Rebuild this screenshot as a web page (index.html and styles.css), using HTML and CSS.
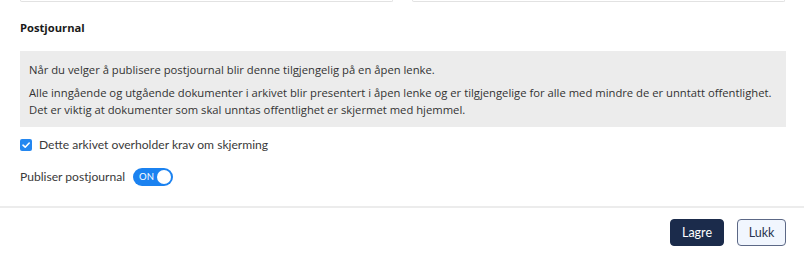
FILE: index.html
```html
<!DOCTYPE html>
<html lang="no">
<head>
<meta charset="utf-8">
<link rel="stylesheet" href="styles.css">
</head>
<body>
<div class="panel">
  <div class="fields">
    <div class="field field-left"></div>
    <div class="field field-right"></div>
  </div>
  <h3 class="heading">Postjournal</h3>
  <div class="info">
    <p>Når du velger å publisere postjournal blir denne tilgjengelig på en åpen lenke.</p>
    <p>Alle inngående og utgående dokumenter i arkivet blir presentert i åpen lenke og er tilgjengelige for alle med mindre de er unntatt offentlighet.<br>Det er viktig at dokumenter som skal unntas offentlighet er skjermet med hjemmel.</p>
  </div>
  <label class="check-row">
    <span class="checkbox">
      <svg width="10" height="10" viewBox="0 0 10 10"><path d="M2 5.2 L4.2 7.2 L8.2 3" fill="none" stroke="#fff" stroke-width="1.6" stroke-linecap="round" stroke-linejoin="round"/></svg>
    </span>
    <span class="label-text">Dette arkivet overholder krav om skjerming</span>
  </label>
  <div class="toggle-row">
    <span class="label-text">Publiser postjournal</span>
    <span class="toggle"><span class="toggle-text">ON</span><span class="knob"></span></span>
  </div>
</div>
<div class="footer">
  <button class="btn btn-primary">Lagre</button>
  <button class="btn btn-secondary">Lukk</button>
</div>
</body>
</html>
```

FILE: styles.css
```css
html, body {
  margin: 0;
  padding: 0;
  background: #fff;
}
body {
  font-family: "Open Sans", "Noto Sans", sans-serif;
  color: #333;
  width: 804px;
}
.panel {
  padding: 0 18px 0 20px;
}
.fields {
  display: flex;
  gap: 19px;
}
.field {
  height: 1px;
  border: 1px solid #e2e2e2;
  border-top: none;
  border-radius: 0 0 4px 4px;
}
.field-left { width: 371px; }
.field-right { width: 371px; }
.heading {
  margin: 17px 0 0;
  font-size: 11.2px;
  font-weight: 700;
  line-height: 18px;
  color: #1a1a1a;
}
.info {
  margin-top: 14px;
  background: #ececec;
  padding: 10px 9px 9px;
  font-size: 11.25px;
  line-height: 17px;
  color: #333;
}
.info p {
  margin: 0;
}
.info p + p {
  margin-top: 6px;
}
.check-row {
  display: flex;
  align-items: center;
  gap: 7px;
  margin-top: 12px;
  height: 12px;
}
.checkbox {
  width: 12px;
  height: 12px;
  border-radius: 2px;
  background: #2487f0;
  display: flex;
  align-items: center;
  justify-content: center;
}
.checkbox svg { display: block; }
.label-text {
  font-family: "Lato", "Noto Sans", sans-serif;
  font-size: 12.1px;
  color: #3a3a3a;
  line-height: 16px;
}
.toggle-row {
  display: flex;
  align-items: center;
  gap: 8px;
  margin-top: 17px;
  height: 18px;
}
.toggle {
  position: relative;
  width: 40px;
  height: 18px;
  border-radius: 9px;
  background: #1b82f0;
  box-sizing: border-box;
}
.toggle-text {
  position: absolute;
  left: 6px;
  top: 0;
  line-height: 18px;
  font-family: "Lato", sans-serif;
  font-size: 9.5px;
  color: #fff;
}
.knob {
  position: absolute;
  right: 2px;
  top: 2px;
  width: 14px;
  height: 14px;
  border-radius: 50%;
  background: #fff;
}
.footer {
  margin-top: 20px;
  border-top: 2px solid #ececec;
  display: flex;
  justify-content: flex-end;
  gap: 13px;
  padding: 11px 18px 0 0;
}
.btn {
  font-family: "Lato", "Noto Sans", sans-serif;
  font-size: 12.5px;
  height: 27px;
  border-radius: 4px;
  padding: 0;
  cursor: pointer;
}
.btn-primary {
  background: #1b2b4b;
  color: #fff;
  border: 1px solid #1b2b4b;
  width: 54px;
}
.btn-secondary {
  background: #f1f6fe;
  color: #2a3550;
  border: 1px solid #5c6886;
  width: 49px;
}
```
